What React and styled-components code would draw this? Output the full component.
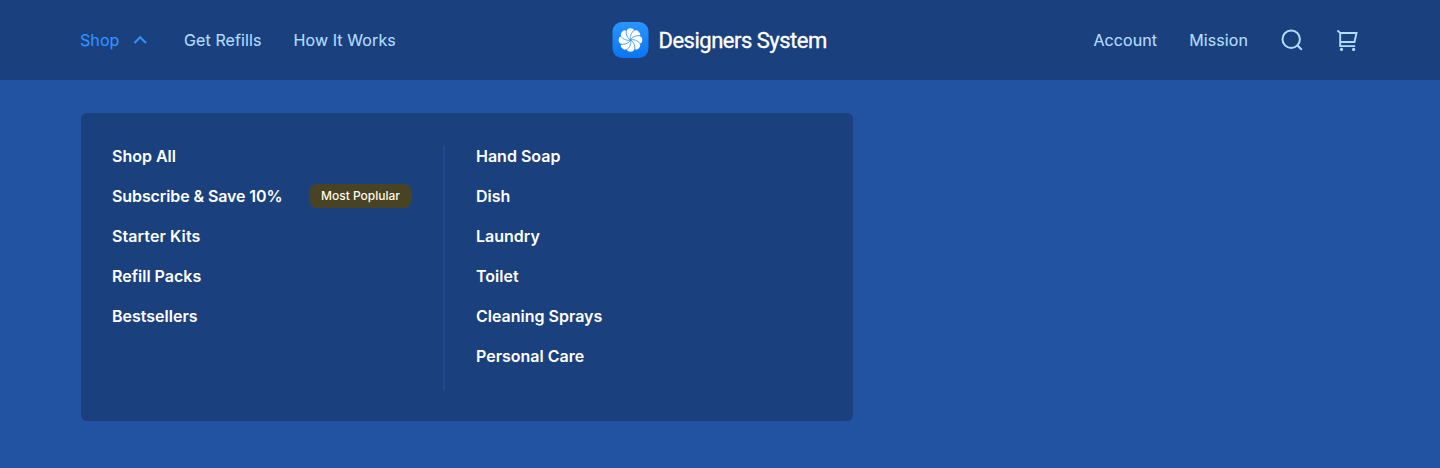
import React from "react";
import styled, { createGlobalStyle } from "styled-components";

const GlobalStyle = createGlobalStyle`
  *, *::before, *::after { box-sizing: border-box; }
  body { margin: 0; background: #2253a3; font-family: Inter, "Liberation Sans", sans-serif; }
`;

const Page = styled.div`
  min-height: 468px;
  background: #2253a3;
`;

const Header = styled.header`
  display: grid;
  grid-template-columns: 1fr auto 1fr;
  align-items: center;
  height: 80px;
  padding: 0 80px;
  background: #1a407d;
`;

const Nav = styled.nav`
  display: flex;
  align-items: center;
  justify-content: ${({ $end }) => ($end ? "flex-end" : "flex-start")};
  gap: 32px;
`;

const NavLink = styled.a`
  display: flex;
  align-items: center;
  gap: 8px;
  font-size: 16px;
  font-weight: 400;
  line-height: 24px;
  letter-spacing: 0.1px;
  -webkit-text-stroke: 0.15px currentColor;
  white-space: nowrap;
  color: ${({ $active }) => ($active ? "#3392ff" : "#b3dcff")};
`;

const IconButton = styled.button`
  display: flex;
  padding: 0;
  border: 0;
  background: none;
  color: #b3dcff;
  width: 24px;
  height: 24px;
`;

const Brand = styled.a`
  display: flex;
  align-items: center;
  gap: 10px;
  padding-right: 1px;
  color: #fff;
  font: 400 22px/28px Roboto, "Liberation Sans", sans-serif;
  letter-spacing: -0.5px;
  -webkit-text-stroke: 0.35px #fff;
  white-space: nowrap;
`;

const BrandName = styled.span`
  width: 169px;
  padding-top: 1px;
`;

const Actions = styled.div`
  display: flex;
  gap: 32px;
`;

const Main = styled.main`
  padding: 33px 81px;
`;

const Panel = styled.section`
  display: flex;
  width: 772px;
  height: 308px;
  padding: 31px;
  border-radius: 6px;
  background: #1a407d;
`;

const Column = styled.ul`
  display: flex;
  flex-direction: column;
  gap: 16px;
  width: 300px;
  margin: 0;
  padding: 0;
  list-style: none;
`;

const Item = styled.li`
  display: flex;
  align-items: center;
  justify-content: space-between;
  height: 24px;
  font-size: 16px;
  font-weight: 600;
  line-height: 24px;
  letter-spacing: ${({ $tracking = 0 }) => $tracking}px;
  white-space: nowrap;
  color: #fff;
`;

const Divider = styled.div`
  width: 2px;
  height: 246px;
  margin: 1px 31px 0;
  border-radius: 1px;
  background: #214b8e;
`;

const Badge = styled.span`
  width: 103px;
  text-align: center;
  border-radius: 8px;
  background: #484325;
  color: #fffbe8;
  font-size: 12px;
  font-weight: 500;
  line-height: 24px;
  letter-spacing: 0;
`;

const petals = [0, 45, 90, 135, 180, 225, 270, 315];

function Logo() {
  return (
    <svg width="37" height="37" viewBox="0 0 37 37">
      <defs>
        <linearGradient id="tile" x1="0" y1="0" x2="0" y2="1">
          <stop offset="0" stopColor="#2995ff" />
          <stop offset="1" stopColor="#0b74f3" />
        </linearGradient>
      </defs>
      <rect x="0.5" y="0" width="36" height="36" rx="9.5" fill="url(#tile)" />
      <g transform="translate(18.5 18)">
        <circle r="8.5" fill="#fff" />
        {petals.map((angle) => (
          <circle key={angle} transform={`rotate(${angle})`} cy="-7.8" r="4" fill="#fff" />
        ))}
        {petals.map((angle) => (
          <path
            key={angle}
            transform={`rotate(${angle})`}
            d="M0 0C-0.9 -2.7 0 -6.8 4.3 -10.4"
            fill="none"
            stroke="#1f85fa"
            strokeWidth="0.75"
          />
        ))}
      </g>
    </svg>
  );
}

const Chevron = () => (
  <svg width="24.5" height="24" viewBox="0 0 24.5 24" fill="none" stroke="currentColor" strokeWidth="2">
    <path d="M6.5 15L12.2 9.2L18 15" />
  </svg>
);

const SearchIcon = () => (
  <svg width="24" height="24" viewBox="0 0 24 24" fill="none" stroke="currentColor" strokeWidth="2">
    <circle cx="11.2" cy="11.2" r="8.7" />
    <path d="M17.3 17.3L21.8 21.8" />
  </svg>
);

const CartIcon = () => (
  <svg width="24" height="24" viewBox="0 0 24 24" fill="none" stroke="currentColor" strokeWidth="1.9">
    <path d="M1.4 2.4L4.2 5V18.1H19.2M4.2 5H20.5L18.5 14H4.2" />
    <circle cx="5.5" cy="21.4" r="1.6" fill="currentColor" stroke="none" />
    <circle cx="17.6" cy="21.4" r="1.6" fill="currentColor" stroke="none" />
  </svg>
);

const shopLinks = [
  { label: "Shop All" },
  { label: "Subscribe & Save 10%", badge: "Most Poplular", tracking: -0.1 },
  { label: "Starter Kits", tracking: 0.1 },
  { label: "Refill Packs" },
  { label: "Bestsellers" },
];

const categories = [
  { label: "Hand Soap" },
  { label: "Dish" },
  { label: "Laundry" },
  { label: "Toilet" },
  { label: "Cleaning Sprays" },
  { label: "Personal Care" },
];

const MenuColumn = ({ items }) => (
  <Column>
    {items.map(({ label, badge, tracking }) => (
      <Item key={label} $tracking={tracking}>
        {label}
        {badge && <Badge>{badge}</Badge>}
      </Item>
    ))}
  </Column>
);

export default function App() {
  return (
    <Page>
      <GlobalStyle />
      <Header>
        <Nav>
          <NavLink $active>
            Shop
            <Chevron />
          </NavLink>
          <NavLink>Get Refills</NavLink>
          <NavLink>How It Works</NavLink>
        </Nav>
        <Brand>
          <Logo />
          <BrandName>Designers System</BrandName>
        </Brand>
        <Nav $end>
          <NavLink>Account</NavLink>
          <NavLink>Mission</NavLink>
          <Actions>
            <IconButton aria-label="Search">
              <SearchIcon />
            </IconButton>
            <IconButton aria-label="Cart">
              <CartIcon />
            </IconButton>
          </Actions>
        </Nav>
      </Header>
      <Main>
        <Panel>
          <MenuColumn items={shopLinks} />
          <Divider />
          <MenuColumn items={categories} />
        </Panel>
      </Main>
    </Page>
  );
}
